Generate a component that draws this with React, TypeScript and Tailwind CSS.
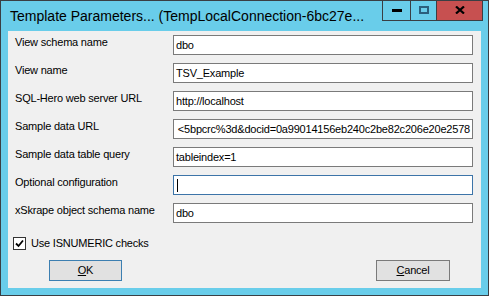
const fields = [
    { label: 'View schema name', value: 'dbo' },
    { label: 'View name', value: 'TSV_Example' },
    { label: 'SQL-Hero web server URL', value: 'http://localhost' },
    { label: 'Sample data URL', value: '<5bpcrc%3d&docid=0a99014156eb240c2be82c206e20e2578', scrolled: true },
    { label: 'Sample data table query', value: 'tableindex=1' },
    { label: 'Optional configuration', value: '', focused: true },
    { label: 'xSkrape object schema name', value: 'dbo' },
];

const uiFont = { fontFamily: '"Liberation Sans", Arial, sans-serif' };

export default function App() {
    return (
        <div
            className="w-[489px] h-[296px] bg-[#69cdea] border border-[#3a3f44] flex flex-col overflow-hidden"
            style={uiFont}
        >
            {/* title bar */}
            <div className="h-[30px] flex items-start">
                <div className="flex-1 pl-[9px] pt-[6px] text-[14px] leading-[18px] text-black whitespace-nowrap">
                    Template Parameters... (TempLocalConnection-6bc27e...
                </div>
                <div className="flex h-[21px] mt-[-1px] mr-[5px] border-x border-b border-[#3a3f44]">
                    <div className="w-[27px] flex items-center justify-center">
                        <div className="w-[10px] h-[3px] bg-black" />
                    </div>
                    <div className="w-[26px] border-l border-[#3a3f44] flex items-center justify-center">
                        <div className="w-[10px] h-[8px] border-2 border-[#2b5f7c]" />
                    </div>
                    <div className="w-[46px] border-l border-[#3a3f44] bg-[#c75050] flex items-center justify-center">
                        <svg width="10" height="8" viewBox="0 0 10 8">
                            <path d="M1 0.5 L9 7.5 M9 0.5 L1 7.5" stroke="black" strokeWidth="2.2" />
                        </svg>
                    </div>
                </div>
            </div>

            {/* client area */}
            <div className="mx-[7px] h-[257px] bg-[#f0f0f0] flex flex-col pt-[4px] text-[11px] tracking-[-0.2px] text-black">
                <div className="flex flex-col gap-[8px]">
                    {fields.map(f => (
                        <div key={f.label} className="flex items-start h-[20px]">
                            <div className="w-[165px] pl-[7px] pt-[1px] leading-[13px]">{f.label}</div>
                            <div
                                className={`w-[300px] h-[20px] bg-white border flex items-center overflow-hidden whitespace-nowrap px-[2px] ${
                                    f.focused ? 'border-[#3c74a8]' : 'border-[#7a7a7a]'
                                } ${f.scrolled ? 'justify-end' : ''}`}
                            >
                                {f.focused ? (
                                    <div className="w-px h-[13px] bg-black ml-[1px]" />
                                ) : (
                                    <span className="leading-[18px]">{f.value}</span>
                                )}
                            </div>
                        </div>
                    ))}
                </div>

                <div className="flex items-center mt-[14px] pl-[5px] h-[13px]">
                    <div className="w-[13px] h-[13px] border border-[#333] bg-white flex items-center justify-center">
                        <svg width="9" height="9" viewBox="0 0 9 9">
                            <path d="M1 4.5 L3.5 7 L8 1.5" fill="none" stroke="black" strokeWidth="1.8" />
                        </svg>
                    </div>
                    <span className="ml-[5px] leading-[13px]">Use ISNUMERIC checks</span>
                </div>

                <div className="flex mt-[10px]">
                    <button className="ml-[41px] w-[73px] h-[21px] bg-[#e1e1e1] border border-[#3c7fb1] text-[11px] leading-[13px]">
                        <span className="underline">O</span>K
                    </button>
                    <button className="ml-[254px] w-[74px] h-[21px] bg-[#e1e1e1] border border-[#7a7a7a] text-[11px] leading-[13px]">
                        <span className="underline">C</span>ancel
                    </button>
                </div>
            </div>
        </div>
    );
}
